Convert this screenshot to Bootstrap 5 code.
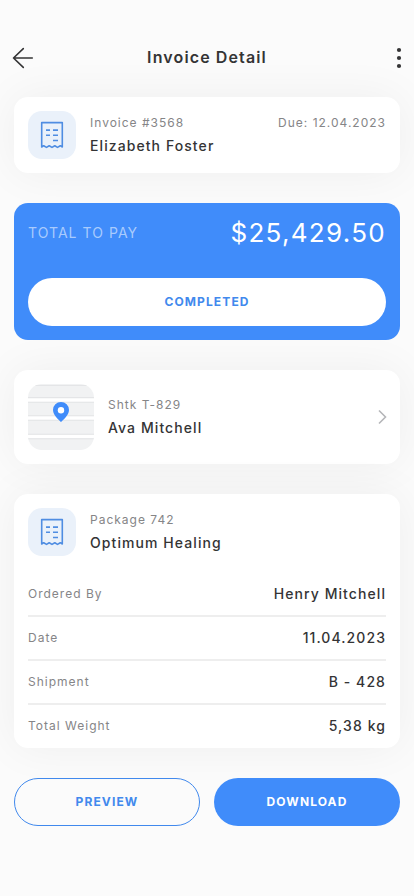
<!DOCTYPE html>
<html lang="en">
<head>
<meta charset="utf-8">
<meta name="viewport" content="width=device-width, initial-scale=1">
<title>Invoice Detail</title>
<link href="https://cdn.jsdelivr.net/npm/bootstrap@5.3.0/dist/css/bootstrap.min.css" rel="stylesheet">
<style>
  :root { --accent: #408cfa; --ink: #343435; --soft: #858587; }
  body { background: #fbfbfb; color: var(--ink); font-family: Inter, "Liberation Sans", sans-serif; height: 896px; overflow: hidden; }
  .screen { width: 414px; padding: 34px 14px 0; }
  .topbar { height: 48px; margin-bottom: 15px; }
  .icon-btn { width: 24px; height: 24px; line-height: 0; color: #343435; }
  .screen-title { font-size: 16px; line-height: 24px; font-weight: 600; letter-spacing: 1.12px; margin: 0 0 2px; }
  .panel { border-radius: 14px; padding: 14px; background: #fff; box-shadow: 0 0 46px rgba(0,0,0,.055); margin-bottom: 30px; }
  .panel-pay { background: var(--accent); box-shadow: none; height: 137px; }
  .tile { width: 48px; height: 48px; border-radius: 14px; background: #eaf1fa; margin-right: 14px; }
  .map-tile { width: 66px; height: 66px; border-radius: 14px; background: #f1f2f3; margin-right: 14px; overflow: hidden; line-height: 0; }
  .label { font-size: 12px; line-height: 23px; letter-spacing: 1px; color: var(--soft); }
  .value { font-size: 14px; line-height: 24px; font-weight: 500; letter-spacing: 1.08px; }
  .pay-label { font-size: 14px; line-height: 32px; letter-spacing: 1.05px; color: #a9cbfd; }
  .amount { font-size: 26px; line-height: 32px; letter-spacing: 1.3px; color: #fff; }
  .pill { height: 48px; border-radius: 24px; font-size: 12px; font-weight: 700; letter-spacing: 1.12px; padding: 0; }
  .pill-white { background: #fff; color: #4189ed; margin-top: 29px; }
  .pill-line { border: 1px solid #4189ed; color: #4189ed; }
  .pill-fill { background: var(--accent); color: #fff; }
  .details { padding-top: 17px; }
  .detail { height: 44px; border-bottom: 2px solid #eee; }
  .detail .label { line-height: 22px; }
  .detail:last-child { height: 43px; border-bottom: 1px solid transparent; }
  .actions { gap: 14px; }
  .stop-text { padding-bottom: 2px; }
</style>
</head>
<body>
<svg class="d-none">
  <symbol id="receipt" viewBox="0 0 24 28">
    <path d="M1.7 1.6H22.3V26L20.3 24.7L17.5 26.4L14.8 24.7L12 26.4L9.2 24.7L6.5 26.4L3.7 24.7L1.7 26Z" fill="none" stroke="#4f8de2" stroke-width="1.6" stroke-linejoin="round"/>
    <path d="M6 9.1H10M13 9.1H18M6 14.3H10M13 14.3H18M13 19.5H18" fill="none" stroke="#4f8de2" stroke-width="1.6"/>
  </symbol>
</svg>
<main class="screen">
  <header class="topbar d-flex align-items-center justify-content-between">
    <a class="icon-btn" href="#" aria-label="Back"><svg width="24" height="24" overflow="visible"><path d="M9.3 2.6L-.5 12L9.3 21.4M-.5 12H18.3" fill="none" stroke="#343435" stroke-width="1.6" stroke-linecap="round" stroke-linejoin="round"/></svg></a>
    <h1 class="screen-title">Invoice Detail</h1>
    <a class="icon-btn text-end" href="#" aria-label="More"><svg width="24" height="24" overflow="visible"><g fill="#343435"><circle cx="23" cy="4" r="2.1"/><circle cx="23" cy="12" r="2.1"/><circle cx="23" cy="20" r="2.1"/></g></svg></a>
  </header>

  <section class="panel d-flex">
    <div class="tile d-flex align-items-center justify-content-center flex-shrink-0"><svg width="24" height="28"><use href="#receipt"/></svg></div>
    <div class="flex-grow-1">
      <div class="label d-flex justify-content-between"><span>Invoice #3568</span><span>Due: 12.04.2023</span></div>
      <div class="value">Elizabeth Foster</div>
    </div>
  </section>

  <section class="panel panel-pay position-relative">
    <div class="d-flex justify-content-between"><span class="pay-label">TOTAL TO PAY</span><span class="amount">$25,429.50</span></div>
    <button class="btn pill pill-white w-100">COMPLETED</button>
  </section>

  <section class="panel d-flex align-items-center">
    <div class="map-tile flex-shrink-0">
      <svg width="66" height="66">
        <path d="M0 1.5H66M0 13.5H66M0 18.3H66M0 31.7H66M0 36.3H66M0 50.2H66M0 54.8H66" stroke="#e4e5e7"/>
        <path d="M0 16H66M0 34H66M0 52.5H66" stroke="#fff" stroke-width="3"/>
        <path d="M33 38.2C31.5 36 25 31.8 25 26A8 8 0 0 1 41 26C41 31.8 34.5 36 33 38.2Z" fill="#408cfa"/>
        <circle cx="33" cy="26.3" r="3.2" fill="#fff"/>
      </svg>
    </div>
    <div class="flex-grow-1 stop-text">
      <div class="label">Shtk T-829</div>
      <div class="value">Ava Mitchell</div>
    </div>
    <svg width="8" height="16" overflow="visible"><path d="M1 1.5L7.5 8L1 14.5" fill="none" stroke="#b5b6b9" stroke-width="1.6"/></svg>
  </section>

  <section class="panel pb-0">
    <div class="d-flex">
      <div class="tile d-flex align-items-center justify-content-center flex-shrink-0"><svg width="24" height="28"><use href="#receipt"/></svg></div>
      <div>
        <div class="label">Package 742</div>
        <div class="value">Optimum Healing</div>
      </div>
    </div>
    <div class="details">
      <div class="detail d-flex align-items-center justify-content-between"><span class="label">Ordered By</span><span class="value">Henry Mitchell</span></div>
      <div class="detail d-flex align-items-center justify-content-between"><span class="label">Date</span><span class="value">11.04.2023</span></div>
      <div class="detail d-flex align-items-center justify-content-between"><span class="label">Shipment</span><span class="value">B - 428</span></div>
      <div class="detail d-flex align-items-center justify-content-between"><span class="label">Total Weight</span><span class="value">5,38 kg</span></div>
    </div>
  </section>

  <div class="d-flex actions">
    <button class="btn pill pill-line w-50">PREVIEW</button>
    <button class="btn pill pill-fill w-50">DOWNLOAD</button>
  </div>
</main>
<script src="https://cdn.jsdelivr.net/npm/bootstrap@5.3.0/dist/js/bootstrap.bundle.min.js"></script>
</body>
</html>
